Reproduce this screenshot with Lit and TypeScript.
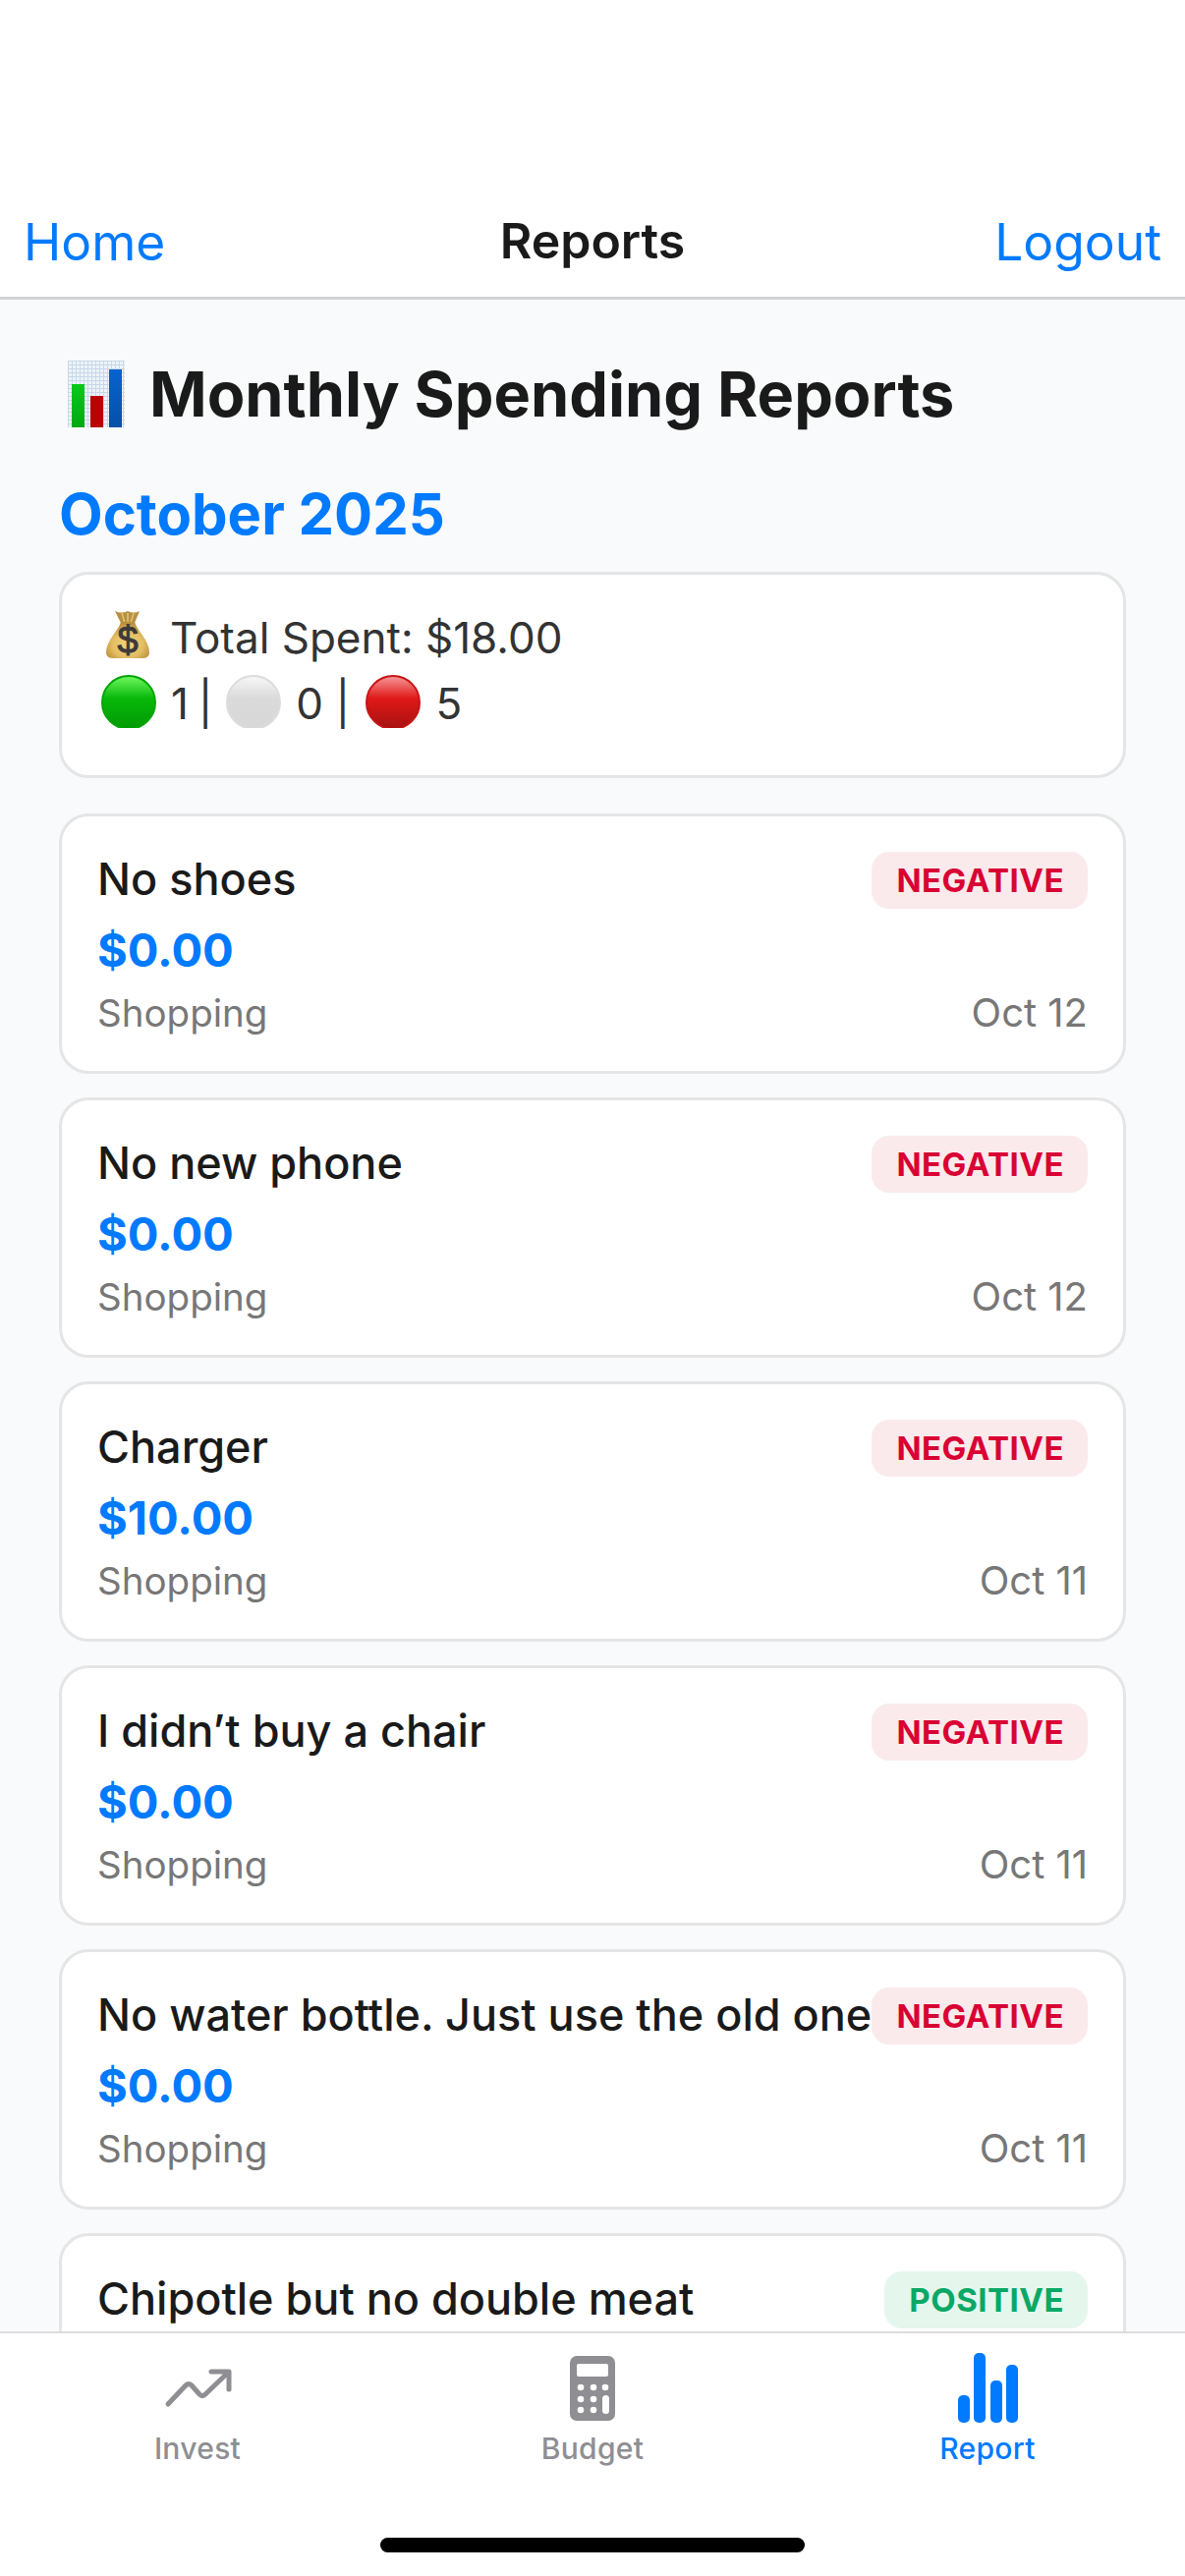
import { LitElement, html, css, svg, nothing } from 'lit';
import { customElement } from 'lit/decorators.js';

interface Entry {
  title: string;
  tone: 'negative' | 'positive';
  // the last card runs under the tab bar, so only its first row is ever seen
  amount?: string;
  category?: string;
  date?: string;
}

const ENTRIES: Entry[] = [
  { title: 'No shoes', amount: '$0.00', category: 'Shopping', date: 'Oct 12', tone: 'negative' },
  { title: 'No new phone', amount: '$0.00', category: 'Shopping', date: 'Oct 12', tone: 'negative' },
  { title: 'Charger', amount: '$10.00', category: 'Shopping', date: 'Oct 11', tone: 'negative' },
  { title: 'I didn\u2019t buy a chair', amount: '$0.00', category: 'Shopping', date: 'Oct 11', tone: 'negative' },
  { title: 'No water bottle. Just use the old one', amount: '$0.00', category: 'Shopping', date: 'Oct 11', tone: 'negative' },
  { title: 'Chipotle but no double meat', tone: 'positive' },
];

const chartEmoji = svg`
  <svg class="chart-emoji" viewBox="0 0 58 68">
    <defs>
      <pattern id="grid" width="4" height="4" patternUnits="userSpaceOnUse">
        <rect width="4" height="4" fill="#eef3f8" />
        <path d="M0 .5H4M.5 0V4" stroke="#c6d8ea" stroke-width="1" />
      </pattern>
      <linearGradient id="g" x1="0" y1="0" x2="0" y2="1">
        <stop offset="0" stop-color="#06c91c" /><stop offset="1" stop-color="#02a814" />
      </linearGradient>
      <linearGradient id="b" x1="0" y1="0" x2="0" y2="1">
        <stop offset="0" stop-color="#0863cf" /><stop offset="1" stop-color="#0450a8" />
      </linearGradient>
    </defs>
    <rect width="58" height="68" fill="url(#grid)" />
    <rect x="4" y="24" width="13" height="44" fill="url(#g)" />
    <rect x="23" y="36" width="13" height="32" fill="#b90303" />
    <rect x="42" y="9" width="13" height="59" fill="url(#b)" />
  </svg>
`;

const bagEmoji = svg`
  <svg class="bag" viewBox="0 0 44 50">
    <defs>
      <radialGradient id="bag-fill" cx="0.5" cy="0.62" r="0.6">
        <stop offset="0" stop-color="#f3d67f" /><stop offset="0.6" stop-color="#e3bd62" /><stop offset="1" stop-color="#b98d3c" />
      </radialGradient>
    </defs>
    <path d="M9 1 Q16 4 22 1 Q28 4 34 1 L29 13 H15 Z" fill="#b98f42" />
    <path d="M16 3 L19 13 M22 3 V13 M28 3 L25 13" stroke="#e2c274" stroke-width="1.6" fill="none" />
    <path d="M15 12 H29 C31 20 44 31 44 43 C44 48 40 49 36 49 H8 C4 49 0 48 0 43 C0 31 13 20 15 12 Z" fill="url(#bag-fill)" />
    <text x="22" y="44" text-anchor="middle" class="bag-sign">$</text>
  </svg>
`;

@customElement('app-root')
export class AppRoot extends LitElement {
  static styles = css`
    :host {
      display: block;
      font-family: Inter, 'Liberation Sans', sans-serif;
    }

    .screen {
      width: 1206px;
      height: 2622px;
      display: flex;
      flex-direction: column;
      background: #f9fafb;
      overflow: hidden;
    }

    .header {
      height: 305px;
      box-sizing: border-box;
      flex: none;
      display: flex;
      align-items: flex-end;
      justify-content: space-between;
      padding: 0 24px 25px;
      background: #ffffff;
      border-bottom: 3px solid #d3d3d5;
      position: relative;
    }

    .link {
      font-size: 51.5px;
      line-height: 62px;
      color: #007aff;
    }

    .header-title {
      position: absolute;
      left: 0;
      right: 0;
      bottom: 26px;
      text-align: center;
      font-size: 50px;
      line-height: 62px;
      font-weight: 600;
      color: #1a1a1a;
    }

    .content {
      flex: 1;
      min-height: 0;
      overflow: hidden;
      padding: 58px 60px 0;
    }

    .page-title {
      display: flex;
      align-items: center;
      gap: 25px;
      margin: 0;
      padding-left: 9px;
      font-size: 63px;
      line-height: 76px;
      font-weight: 700;
      color: #1a1a1a;
    }

    .chart-emoji {
      width: 58px;
      height: 68px;
      flex: none;
    }

    .month {
      margin: 51px 0 0;
      font-size: 58px;
      line-height: 66px;
      font-weight: 700;
      color: #007aff;
    }

    .card {
      box-sizing: border-box;
      background: #ffffff;
      border: 3px solid #e5e5e5;
      border-radius: 30px;
    }

    .summary {
      height: 210px;
      margin: 26px 0 36px;
      padding: 31px 36px 0;
      font-size: 44px;
      line-height: 67px;
      color: #333333;
    }

    .summary-line {
      display: flex;
      align-items: flex-start;
      white-space: pre;
    }

    .tight {
      word-spacing: -2.5px;
    }

    .bag {
      width: 44px;
      height: 50px;
      flex: none;
      margin: 5px 21px 0 9px;
      overflow: visible;
    }

    .bag-sign {
      font-family: 'Liberation Sans', sans-serif;
      font-size: 38px;
      font-weight: 400;
      fill: #3d3a38;
      stroke: #3d3a38;
      stroke-width: 1;
    }

    /* the reference emoji are cut off two pixels short of their bottom edge */
    .dot-clip {
      width: 56px;
      height: 54px;
      flex: none;
      overflow: hidden;
      margin: 4px 15px 0 4px;
    }

    .dot {
      display: block;
      width: 56px;
      height: 56px;
      box-sizing: border-box;
      border-radius: 50%;
      border: 2px solid;
    }

    .dot.green {
      border-color: #03a506;
      background: linear-gradient(#6cf65c, #08b80a 42%, #029a04);
    }

    .dot.grey {
      border-color: #dcdcdc;
      background: linear-gradient(#f6f6f6, #dadada 42%, #d8d8d8);
    }

    .dot.red {
      border-color: #c81414;
      background: linear-gradient(#f59494, #e01818 42%, #a81212);
    }

    .entry {
      height: 265px;
      margin-bottom: 24px;
      padding: 36px 36px 0;
    }

    .row {
      display: flex;
      align-items: flex-start;
      justify-content: space-between;
    }

    .entry-title {
      flex: 1;
      min-width: 0;
      font-size: 45px;
      line-height: 56px;
      font-weight: 500;
      color: #1a1a1a;
      white-space: nowrap;
    }

    .badge {
      flex: none;
      height: 58px;
      box-sizing: border-box;
      padding: 0 24px 0 25px;
      border-radius: 18px;
      font-size: 33px;
      line-height: 58px;
      font-weight: 700;
      letter-spacing: 0.5px;
    }

    .badge.negative {
      background: #fbeaec;
      color: #d90034;
    }

    .badge.positive {
      background: #e5f6ec;
      color: #0aa866;
    }

    .amount {
      margin-top: 13px;
      font-size: 47px;
      line-height: 58px;
      font-weight: 700;
      color: #007aff;
    }

    .meta {
      margin-top: 10px;
      font-size: 38.5px;
      line-height: 50px;
      color: #777777;
    }

    .date {
      font-size: 40px;
    }

    .tabbar {
      height: 249px;
      box-sizing: border-box;
      flex: none;
      background: #ffffff;
      border-top: 2px solid #dcdcde;
      position: relative;
      display: grid;
      grid-template-columns: repeat(3, 1fr);
    }

    .tab {
      height: 137px;
      display: flex;
      flex-direction: column;
      align-items: center;
      justify-content: flex-end;
      font-size: 30px;
      line-height: 40px;
      font-weight: 500;
      letter-spacing: 0.3px;
      color: #8e8e93;
    }

    .tab.active {
      color: #007aff;
    }

    .tab svg {
      display: block;
      height: 80px;
      margin-bottom: 4px;
    }

    .home-bar {
      position: absolute;
      left: 387px;
      bottom: 24px;
      width: 432px;
      height: 15px;
      border-radius: 8px;
      background: #000000;
    }
  `;

  private renderEntry(entry: Entry) {
    return html`
      <div class="card entry">
        <div class="row">
          <div class="entry-title">${entry.title}</div>
          <div class="badge ${entry.tone}">${entry.tone.toUpperCase()}</div>
        </div>
        ${entry.amount
          ? html`
              <div class="amount">${entry.amount}</div>
              <div class="row meta">
                <span>${entry.category}</span>
                <span class="date">${entry.date}</span>
              </div>
            `
          : nothing}
      </div>
    `;
  }

  render() {
    return html`
      <div class="screen">
        <div class="header">
          <span class="link">Home</span>
          <span class="header-title">Reports</span>
          <span class="link">Logout</span>
        </div>

        <div class="content">
          <h1 class="page-title">${chartEmoji}<span>Monthly Spending Reports</span></h1>
          <div class="month">October 2025</div>

          <div class="card summary">
            <div class="summary-line">${bagEmoji}<span>Total Spent: $18.00</span></div>
            <div class="summary-line">
              <span class="dot-clip"><span class="dot green"></span></span><span class="tight">1 | </span>
              <span class="dot-clip"><span class="dot grey"></span></span><span>0 | </span>
              <span class="dot-clip"><span class="dot red"></span></span><span>5</span>
            </div>
          </div>

          ${ENTRIES.map((entry) => this.renderEntry(entry))}
        </div>

        <div class="tabbar">
          <div class="tab">
            <svg viewBox="0 0 70 80" width="70">
              <path d="M5 59 L23 40 Q26 37 29 40 L37 49 Q40 52 43 49 L66 27 M49 26 H67 V44" fill="none" stroke="currentColor" stroke-width="5" stroke-linecap="round" stroke-linejoin="round" />
            </svg>
            Invest
          </div>
          <div class="tab">
            <svg viewBox="0 0 48 80" width="48">
              <rect x="1" y="10" width="46" height="66" rx="7" fill="currentColor" />
              <rect x="8" y="18" width="32" height="13" rx="2" fill="#fff" />
              <circle cx="12" cy="42" r="3.3" fill="#fff" /><circle cx="25" cy="42" r="3.3" fill="#fff" /><circle cx="37" cy="42" r="3.3" fill="#fff" />
              <circle cx="12" cy="54" r="3.3" fill="#fff" /><circle cx="25" cy="54" r="3.3" fill="#fff" />
              <circle cx="12" cy="65" r="3.3" fill="#fff" /><circle cx="25" cy="65" r="3.3" fill="#fff" />
              <rect x="34" y="50" width="7" height="19" rx="3.5" fill="#fff" />
            </svg>
            Budget
          </div>
          <div class="tab active">
            <svg viewBox="0 0 62 80" width="62">
              <rect x="1" y="50" width="12" height="28" rx="5" fill="currentColor" />
              <rect x="17" y="7" width="12" height="71" rx="5" fill="currentColor" />
              <rect x="34" y="35" width="12" height="43" rx="5" fill="currentColor" />
              <rect x="50" y="19" width="12" height="59" rx="5" fill="currentColor" />
            </svg>
            Report
          </div>
          <div class="home-bar"></div>
        </div>
      </div>
    `;
  }
}
